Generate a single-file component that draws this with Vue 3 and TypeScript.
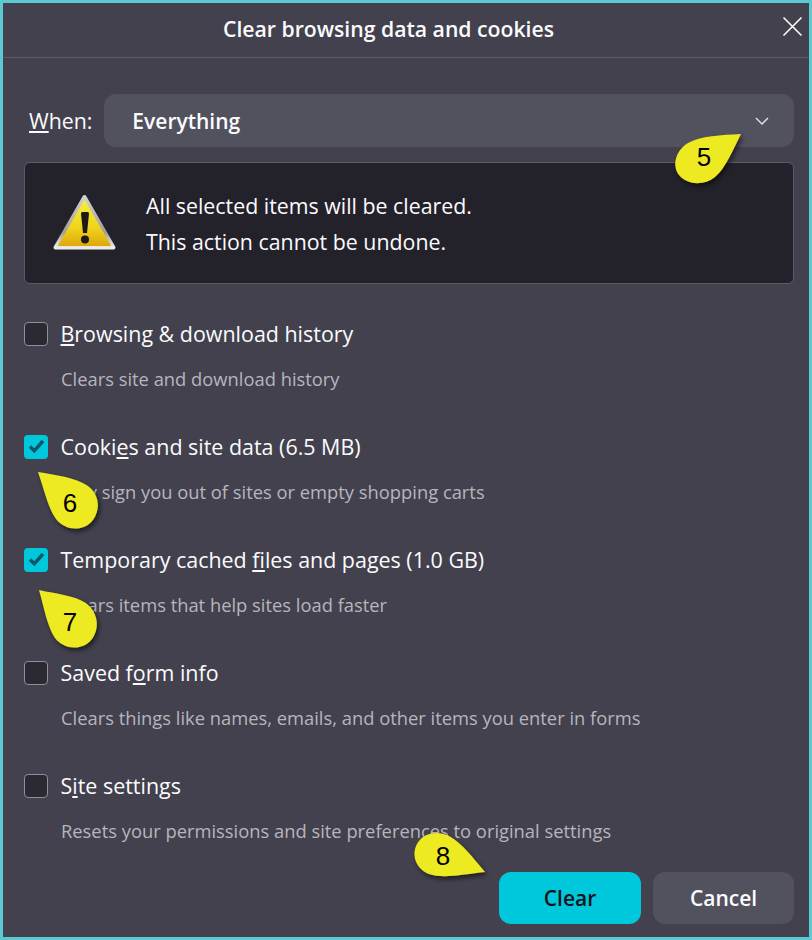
<script setup lang="ts">
interface ClearItem {
  before: string
  key: string
  after: string
  hint: string
  checked: boolean
}

const items: ClearItem[] = [
  { before: '', key: 'B', after: 'rowsing & download history', hint: 'Clears site and download history', checked: false },
  { before: 'Cooki', key: 'e', after: 's and site data (6.5 MB)', hint: 'May sign you out of sites or empty shopping carts', checked: true },
  { before: 'Temporary cached ', key: 'f', after: 'iles and pages (1.0 GB)', hint: 'Clears items that help sites load faster', checked: true },
  { before: 'Saved f', key: 'o', after: 'rm info', hint: 'Clears things like names, emails, and other items you enter in forms', checked: false },
  { before: 'S', key: 'i', after: 'te settings', hint: 'Resets your permissions and site preferences to original settings', checked: false },
]

const callouts = [
  { n: 5, x: 704, y: 166, d: 'M741 134C722 135 700 136 688 143C675 151 672 166 679 175C687 185 704 186 715 177C725 169 733 150 741 134Z' },
  { n: 6, x: 70, y: 512, d: 'M38 472C44 489 48 508 56 519C65 531 84 532 93 520C101 509 99 494 88 486C75 477 55 475 38 472Z' },
  { n: 7, x: 70, y: 631, d: 'M39 590C44 607 47 626 55 638C64 650 83 651 92 639C100 628 98 613 87 604C75 595 56 594 39 590Z' },
  { n: 8, x: 443, y: 865, d: 'M485 872C474 859 462 843 449 836C437 830 423 833 417 844C411 855 416 869 429 874C443 879 465 874 485 872Z' },
]
</script>

<template>
  <div class="dialog">
    <header class="title-bar">
      <h1>Clear browsing data and cookies</h1>
      <svg class="close" width="22" height="22" viewBox="0 0 22 22" fill="none" stroke="#fbfbfe" stroke-width="1.6">
        <path d="M1.500 1.500 19.500 19.500M19.500 1.500 1.500 19.500" />
      </svg>
    </header>

    <main class="body">
      <div class="when-row">
        <span class="when-label"><u>W</u>hen:</span>
        <div class="select">
          <span>Everything</span>
          <svg width="14" height="10" viewBox="0 0 14 10" fill="none" stroke="#e4e3ea" stroke-width="1.4">
            <path d="M1 2 7 8 13 2" />
          </svg>
        </div>
      </div>

      <div class="warning">
        <svg width="66" height="60" viewBox="0 0 66 60">
          <defs>
            <linearGradient id="warnFill" x1="0" y1="0" x2="0" y2="1">
              <stop offset="0" stop-color="#f6ee3c" />
              <stop offset="0.6" stop-color="#f0d41c" />
              <stop offset="1" stop-color="#dfa80e" />
            </linearGradient>
            <linearGradient id="warnEdge" x1="0" y1="0" x2="0" y2="1">
              <stop offset="0" stop-color="#d2d2cc" />
              <stop offset="0.7" stop-color="#a09f96" />
              <stop offset="1" stop-color="#ecece6" />
            </linearGradient>
          </defs>
          <path d="M32.500 4 61.500 54.500H3.500Z" fill="url(#warnEdge)" stroke="url(#warnEdge)" stroke-width="4" stroke-linejoin="round" />
          <path d="M32.500 7.500 58.500 52.500H6.500Z" fill="url(#warnFill)" stroke="url(#warnFill)" stroke-width="1" stroke-linejoin="round" />
          <path d="M29 20.500Q29 19 30.500 19H35.500Q37 19 37 20.500L35 40H31Z" fill="#1c1a12" />
          <circle cx="33" cy="46.500" r="4" fill="#1c1a12" />
        </svg>
        <div class="warning-text">
          <div>All selected items will be cleared.</div>
          <div>This action cannot be undone.</div>
        </div>
      </div>

      <ul class="items">
        <li v-for="item in items" :key="item.hint" class="item">
          <div class="item-line">
            <span class="box" :class="{ checked: item.checked }">
              <svg v-if="item.checked" width="24" height="24" viewBox="0 0 24 24" fill="none" stroke="#0d5567" stroke-width="3.400">
                <path d="M6 11.500 10.300 15.800 19 6" />
              </svg>
            </span>
            <span class="label">{{ item.before }}<u>{{ item.key }}</u>{{ item.after }}</span>
          </div>
          <p class="hint">{{ item.hint }}</p>
        </li>
      </ul>

      <footer class="actions">
        <button class="btn primary">Clear</button>
        <button class="btn cancel">Cancel</button>
      </footer>
    </main>

    <svg class="callouts" width="812" height="940" viewBox="0 0 812 940">
      <defs>
        <filter id="calloutShadow" x="-20%" y="-20%" width="150%" height="150%">
          <feDropShadow dx="2" dy="3" stdDeviation="2.500" flood-color="#000" flood-opacity="0.55" />
        </filter>
      </defs>
      <g v-for="c in callouts" :key="c.n">
        <path :d="c.d" fill="#eeea22" filter="url(#calloutShadow)" />
        <text :x="c.x" :y="c.y" text-anchor="middle">{{ c.n }}</text>
      </g>
    </svg>
  </div>
</template>

<style>
html,
body {
  margin: 0;
  background: #42414d;
}
</style>

<style scoped>
.dialog {
  position: relative;
  box-sizing: border-box;
  width: 812px;
  height: 940px;
  border: 3px solid #5cc8d2;
  background: #42414d;
  color: #fbfbfe;
  font-family: "Open Sans", "Noto Sans", sans-serif;
  overflow: hidden;
}

.title-bar {
  position: relative;
  height: 50px;
  padding: 0 35px 4px 0;
  border-bottom: 1px solid #5b5a66;
  display: flex;
  align-items: center;
  justify-content: center;
}

.title-bar h1 {
  margin: 0;
  font-size: 21.200px;
  font-weight: 600;
}

.close {
  position: absolute;
  right: 5px;
  top: 13px;
}

.body {
  padding: 36px 15px 0 21px;
  display: flex;
  flex-direction: column;
}

.when-row {
  display: flex;
  align-items: center;
  gap: 12px;
  padding-left: 5px;
}

.when-label {
  font-size: 21.300px;
}

.select {
  flex: 1;
  height: 53px;
  border-radius: 12px;
  background: #52515e;
  display: flex;
  align-items: center;
  justify-content: space-between;
  padding: 0 25px 0 28px;
  font-size: 21px;
  font-weight: 600;
}

.warning {
  margin-top: 15px;
  height: 122px;
  box-sizing: border-box;
  border: 1px solid #5b5a66;
  border-radius: 6px;
  background: #23222b;
  display: flex;
  align-items: center;
  padding-left: 27px;
  gap: 28px;
}

.warning-text {
  margin-top: 2px;
  font-size: 21.350px;
  line-height: 36px;
}

.items {
  list-style: none;
  margin: 37px 0 0;
  padding: 0;
  display: flex;
  flex-direction: column;
  gap: 45px;
}

.item {
  height: 68px;
}

.item-line {
  display: flex;
  align-items: center;
  gap: 12.500px;
  height: 26px;
}

.box {
  width: 24px;
  height: 24px;
  box-sizing: border-box;
  border: 1px solid #8f8f9d;
  border-radius: 4px;
  background: #2b2a33;
  display: flex;
  align-items: center;
  justify-content: center;
}

.box.checked {
  border: none;
  background: #00c8dc;
}

.label {
  font-size: 21.450px;
  line-height: 26px;
}

.hint {
  margin: 19px 0 0 37px;
  font-size: 18.350px;
  line-height: 26px;
  color: #b6b5bd;
}

.actions {
  position: absolute;
  right: 15px;
  bottom: 13px;
  display: flex;
  gap: 12px;
}

.btn {
  width: 142px;
  height: 52px;
  border: none;
  border-radius: 12px;
  background: #52515e;
  color: #fbfbfe;
  font-family: inherit;
  font-size: 21px;
  font-weight: 600;
}

.btn.cancel {
  width: 141px;
}

.btn.primary {
  background: #00c8dc;
  color: #15141a;
}

.callouts {
  position: absolute;
  left: -3px;
  top: -3px;
  pointer-events: none;
}

.callouts text {
  font-family: "Liberation Sans", Arial, sans-serif;
  font-size: 26px;
  fill: #000;
}
</style>
